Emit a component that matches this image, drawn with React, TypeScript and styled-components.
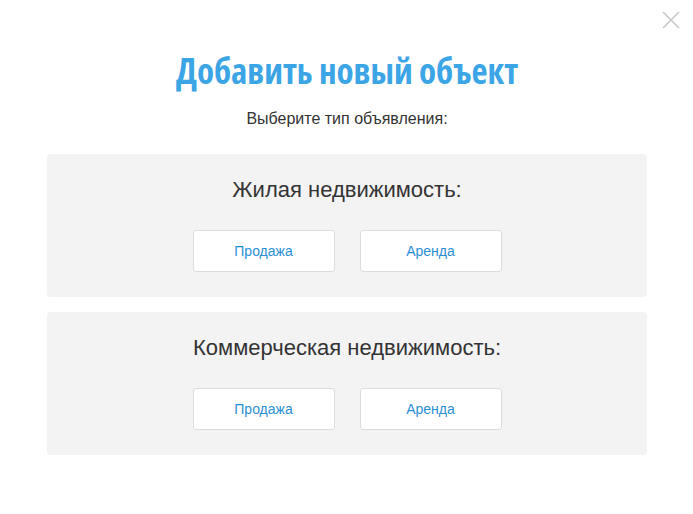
import styled, { createGlobalStyle } from "styled-components";

const GlobalStyle = createGlobalStyle`
  html, body {
    margin: 0;
    padding: 0;
    background: #fff;
  }
  body {
    font-family: "Liberation Sans", Arial, sans-serif;
  }
`;

const sections = ["Жилая недвижимость:", "Коммерческая недвижимость:"];

const Modal = styled.div`
  position: relative;
  width: 693px;
  height: 514px;
  box-sizing: border-box;
  padding: 48px 46px 0 47px;
  display: flex;
  flex-direction: column;
  align-items: stretch;
`;

const Close = styled.button`
  position: absolute;
  top: 10px;
  right: 12px;
  width: 20px;
  height: 20px;
  padding: 0;
  border: none;
  background: none;
  cursor: pointer;
`;

const Title = styled.h1`
  margin: 0;
  text-align: center;
  font-family: "Open Sans", sans-serif;
  font-stretch: 75%;
  font-weight: 700;
  font-size: 35px;
  line-height: 46px;
  color: #3ba5e6;
`;

const Subtitle = styled.p`
  margin: 16px 0 0;
  text-align: center;
  font-size: 16px;
  line-height: 18px;
  color: #333;
`;

const Sections = styled.div`
  margin-top: 26px;
  display: flex;
  flex-direction: column;
  gap: 15px;
`;

const Panel = styled.div`
  background: #f3f3f3;
  border-radius: 4px;
  height: 143px;
  box-sizing: border-box;
  padding-top: 23px;
  display: flex;
  flex-direction: column;
  align-items: center;
`;

const PanelTitle = styled.h2`
  margin: 0;
  font-weight: 400;
  font-size: 22px;
  line-height: 26px;
  color: #333;
`;

const Buttons = styled.div`
  margin-top: 27px;
  display: flex;
  gap: 25px;
`;

const Choice = styled.button`
  width: 142px;
  height: 42px;
  background: #fff;
  border: 1px solid #dcdcdc;
  border-radius: 3px;
  font-family: "Liberation Sans", Arial, sans-serif;
  font-size: 14px;
  color: #2b8fd6;
  cursor: pointer;
`;

export default function App() {
  return (
    <>
      <GlobalStyle />
      <Modal>
        <Close aria-label="Закрыть">
          <svg width="20" height="20" viewBox="0 0 20 20">
            <path d="M2 2 L18 18 M18 2 L2 18" stroke="#c8c8c8" strokeWidth="1.6" />
          </svg>
        </Close>
        <Title>Добавить новый объект</Title>
        <Subtitle>Выберите тип объявления:</Subtitle>
        <Sections>
          {sections.map((s) => (
            <Panel key={s}>
              <PanelTitle>{s}</PanelTitle>
              <Buttons>
                <Choice>Продажа</Choice>
                <Choice>Аренда</Choice>
              </Buttons>
            </Panel>
          ))}
        </Sections>
      </Modal>
    </>
  );
}
